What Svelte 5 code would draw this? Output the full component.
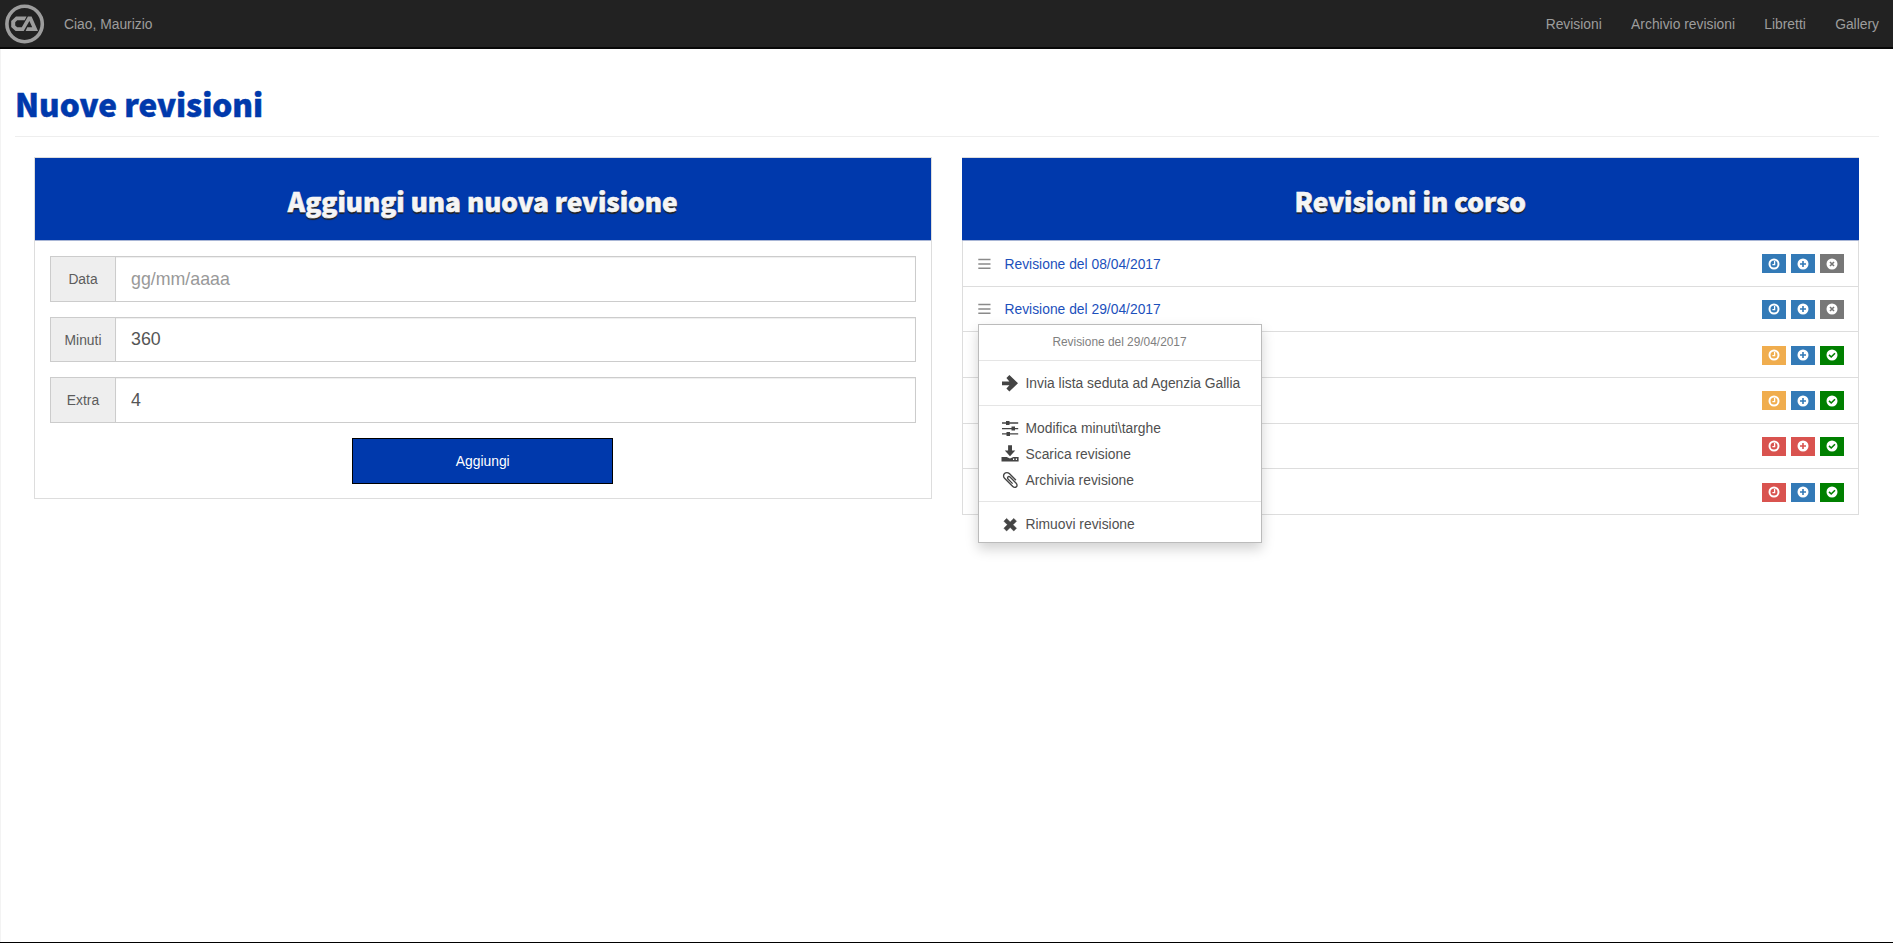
<script>
  const links = ['Revisioni', 'Archivio revisioni', 'Libretti', 'Gallery'];
  const fields = [
    { label: 'Data', value: '', placeholder: 'gg/mm/aaaa' },
    { label: 'Minuti', value: '360', placeholder: '' },
    { label: 'Extra', value: '4', placeholder: '' }
  ];
  const rows = [
    { date: '08/04/2017', marks: [['time', 'blue'], ['plus', 'blue'], ['remove', 'gray']] },
    { date: '29/04/2017', open: true, marks: [['time', 'blue'], ['plus', 'blue'], ['remove', 'gray']] },
    { marks: [['time', 'orange'], ['plus', 'blue'], ['ok', 'green']] },
    { marks: [['time', 'orange'], ['plus', 'blue'], ['ok', 'green']] },
    { marks: [['time', 'red'], ['plus', 'red'], ['ok', 'green']] },
    { marks: [['time', 'red'], ['plus', 'blue'], ['ok', 'green']] }
  ];
  const groups = [
    [['arrow', 'Invia lista seduta ad Agenzia Gallia']],
    [['sliders', 'Modifica minuti\\targhe'], ['save', 'Scarica revisione'], ['clip', 'Archivia revisione']],
    [['cross', 'Rimuovi revisione']]
  ];
</script>

<div class="page">
  <nav>
    <svg class="logo" viewBox="0 0 40 40" width="40" height="40">
      <circle cx="19.6" cy="20" r="17.7" fill="none" stroke="#9d9d9d" stroke-width="3.6" />
      <path fill="#9d9d9d" d="M11 12.4H21.6L19.6 16.2H12.2L10.2 18.2V21.4L12.2 23.3H16.8L22.9 12.4H26.6L33 27H20.6L22.3 23.3H27.2L24.4 16.9L18.7 27H10.6L6.2 22.9V16.9Z" />
    </svg>
    <span class="hello">Ciao, Maurizio</span>
    <div class="links">{#each links as l}<span>{l}</span>{/each}</div>
  </nav>

  <main>
    <h1>Nuove revisioni</h1>
    <div class="columns">
      <section>
        <h2>Aggiungi una nuova revisione</h2>
        <form>
          {#each fields as f}
            <div class="field">
              <label for={f.label}>{f.label}</label>
              <input id={f.label} value={f.value} placeholder={f.placeholder} />
            </div>
          {/each}
          <button type="button">Aggiungi</button>
        </form>
      </section>

      <section>
        <h2>Revisioni in corso</h2>
        {#each rows as r}
          <div class="row">
            {#if r.date}
              <svg class="burger" width="13" height="12" viewBox="0 0 13 12"><path d="M.3 1.5H12.5M.3 6H12.5M.3 10.2H12.5" stroke="#8a8a8a" stroke-width="1.5" /></svg>
              <span class="name">Revisione del {r.date}</span>
            {/if}
            <div class="marks">
              {#each r.marks as [icon, color]}
                <span class="mark {color} {icon}">
                  <svg width="12" height="12" viewBox="0 0 12 12" fill="none" stroke="currentColor">
                    {#if icon === 'time'}
                      <circle cx="6" cy="6" r="4.5" stroke="#fff" stroke-width="2" />
                      <path d="M6.6 3V6.6H4.4" stroke="#fff" stroke-width="1.3" />
                    {:else}
                      <circle cx="6" cy="6" r="5.5" fill="#fff" stroke="none" />
                      {#if icon === 'plus'}
                        <path d="M6 3V9M3 6H9" stroke-width="1.6" />
                      {:else if icon === 'remove'}
                        <path d="M4 4L8 8M8 4L4 8" stroke-width="1.6" />
                      {:else}
                        <path d="M3 5.9L5.2 8L9 4.2" stroke-width="1.6" />
                      {/if}
                    {/if}
                  </svg>
                </span>
              {/each}
            </div>
            {#if r.open}
              <div class="menu">
                <div class="title">Revisione del {r.date}</div>
                {#each groups as g}
                  <div class="group">
                    {#each g as [icon, text]}
                      <div class="item">
                        <svg width="18" height="18" viewBox="0 0 18 18" fill="#444">
                          {#if icon === 'arrow'}
                            <path d="M1 7.4H8.4L5.4 4L8.4 1L17 9.2L8.4 17.4L5.4 14.4L8.4 11.2H1Z" />
                          {:else if icon === 'sliders'}
                            <path d="M1 3.3H17.2V4.7H1ZM1 8.9H17.2V10.3H1ZM1 14.2H17.2V15.6H1ZM5 2H8.5V6H5ZM10.5 7.6H14V11.6H10.5ZM5.5 12.9H9V16.9H5.5Z" />
                          {:else if icon === 'save'}
                            <path d="M7.1 .2H11V5.4H14.3L9 11.2L3.8 5.4H7.1Z" />
                            <path fill-rule="evenodd" d="M.5 12H5.7L9 13.6L12.4 12H17.6V16.6H.5ZM12 13.6V14.9H13.2V13.6ZM14.8 13.6V14.9H16V13.6Z" />
                          {:else if icon === 'clip'}
                            <path transform="translate(-.2 -.5) scale(.0106)" d="M1596 1385q0 117-79 196t-196 79q-135 0-235-100l-777-776q-113-115-113-271 0-159 110-270t269-111q158 0 273 113l605 606q10 10 10 22 0 16-30.5 46.5t-46.5 30.5q-13 0-23-10l-606-607q-79-77-181-77-106 0-179 75t-73 181q0 105 76 181l776 777q63 63 145 63 64 0 106-42t42-106q0-82-63-145l-581-581q-26-24-60-24-29 0-48 19t-19 48q0 32 25 59l410 410q10 10 10 22 0 16-31 47t-47 31q-12 0-22-10l-410-410q-63-61-63-149 0-82 57-139t139-57q88 0 149 63l581 581q100 98 100 235z" />
                          {:else}
                            <path d="M5.6 3.4L9.2 6.9L12.8 3.4L15.5 6.2L12 9.7L15.5 13.2L12.8 16L9.2 12.5L5.6 16L2.9 13.2L6.4 9.7L2.9 6.2Z" stroke="#444" stroke-width=".5" stroke-linejoin="round" />
                          {/if}
                        </svg>
                        <span>{text}</span>
                      </div>
                    {/each}
                  </div>
                {/each}
              </div>
            {/if}
          </div>
        {/each}
      </section>
    </div>
  </main>
</div>

<style>
  .page {
    box-sizing: border-box;
    height: 943px;
    overflow: hidden;
    background: #fff;
    border-bottom: 1px solid #000;
    font: 13.85px/20px "Liberation Sans", Arial, sans-serif;
    color: #5c5c5c;
    display: flex;
    flex-direction: column;
  }
  nav {
    box-sizing: border-box;
    height: 49px;
    flex: none;
    background: #222;
    border-bottom: 2px solid #080808;
    color: #9d9d9d;
    display: flex;
    align-items: center;
    padding: 0 14px 0 5px;
  }
  .logo { display: block; }
  .hello { margin-left: 19px; }
  .links { margin-left: auto; display: flex; gap: 29.3px; }
  main {
    flex: 1;
    border-left: 1px solid #f3f3f3;
    padding: 0 14px;
  }
  h1 {
    box-sizing: border-box;
    height: 88px;
    margin: 0;
    padding-top: 34px;
    border-bottom: 1px solid #eee;
    color: #0039ac;
    font: 900 31.5px/40px "Noto Sans CJK SC", sans-serif;
    -webkit-text-stroke: .5px #0039ac;
  }
  .columns {
    display: grid;
    grid-template-columns: 1fr 1fr;
    gap: 30px;
    padding: 20px 20px 0 19px;
  }
  section {
    box-sizing: border-box;
    border: 1px solid #ddd;
    align-self: start;
  }
  h2 {
    box-sizing: border-box;
    height: 83px;
    margin: 0 -.5px;
    padding-top: 25px;
    background: #0039ac;
    border-bottom: 1px solid #a9b6d6;
    color: #f5f5f5;
    text-align: center;
    text-shadow: 0 1.5px 1px #222;
    font: 900 26.2px/36px "Noto Sans CJK SC", sans-serif;
    -webkit-text-stroke: .6px #f5f5f5;
  }
  form { padding: 15px 15px 14px; display: flex; flex-direction: column; gap: 15.1px; }
  .field { display: flex; height: 45.5px; box-sizing: border-box; border: 1px solid #ccc; }
  label {
    box-sizing: border-box;
    width: 65px;
    background: #eee;
    border-right: 1px solid #ccc;
    text-align: center;
    line-height: 44px;
  }
  input {
    flex: 1;
    border: 0;
    padding: 1px 15px 0;
    outline: 0;
    background: #fff;
    color: #555;
    font: 17.8px "Liberation Sans", Arial, sans-serif;
    box-shadow: inset 0 1px 1px rgba(0, 0, 0, .07);
  }
  input::placeholder { color: #999; opacity: 1; }
  button {
    align-self: center;
    width: 261px;
    height: 46px;
    border: 1px solid #000;
    background: #0039ac;
    color: #fff;
    font: 13.85px "Liberation Sans", Arial, sans-serif;
  }
  .row {
    position: relative;
    box-sizing: border-box;
    height: 45.67px;
    display: flex;
    align-items: center;
    padding: 1px 14.5px 0 15px;
    border-bottom: 1px solid #ddd;
  }
  .row:last-child { border-bottom: 0; height: 45px; }
  .burger { display: block; }
  .name { margin-left: 14px; color: #1c50bc; }
  .marks { margin-left: auto; display: flex; gap: 5px; }
  .mark { width: 24px; height: 19px; display: flex; align-items: center; justify-content: center; }
  .blue { background: #337ab7; color: #337ab7; }
  .gray { background: #777; color: #777; }
  .orange { background: #f0ad4e; color: #f0ad4e; }
  .red { background: #d9534f; color: #d9534f; }
  .green { background: #008000; color: #008000; }
  .menu {
    position: absolute;
    z-index: 2;
    left: 15px;
    top: 37px;
    box-sizing: border-box;
    width: 284px;
    height: 219px;
    background: #fff;
    border: 1px solid #bbb;
    box-shadow: 0 6px 12px rgba(0, 0, 0, .18);
    color: #505050;
  }
  .title { height: 35px; line-height: 35px; font-size: 11.9px; text-align: center; color: #808080; }
  .group { border-top: 1px solid #e5e5e5; padding: 9px 0 9px 22px; }
  .group:nth-child(2) { padding-bottom: 10px; }
  .group:last-child { padding-top: 9px; }
  .item { display: flex; align-items: center; height: 25.7px; gap: 7px; }
  .item svg { display: block; }
</style>
